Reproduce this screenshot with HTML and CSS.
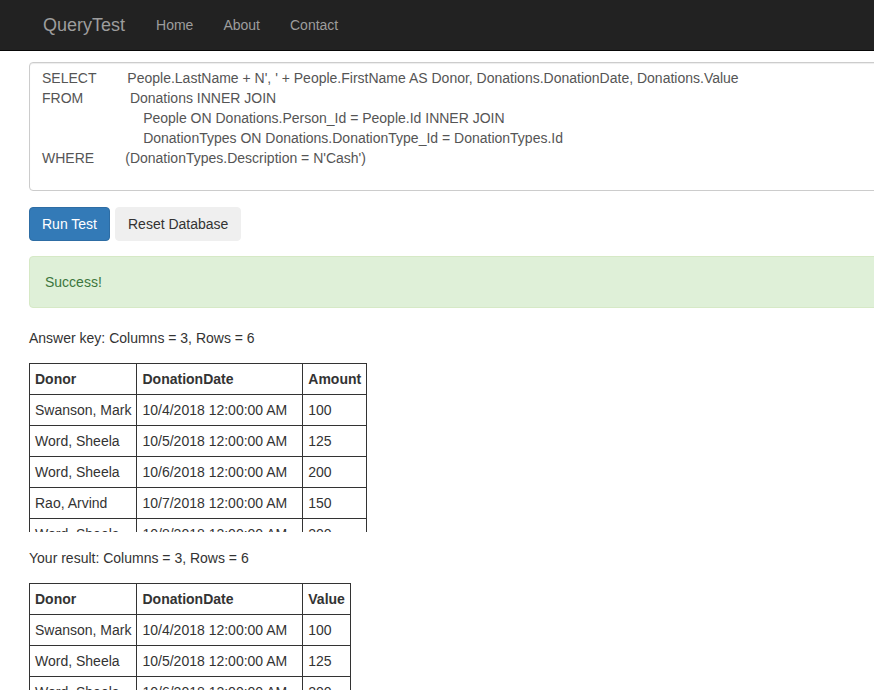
FILE: index.html
```html
<!DOCTYPE html>
<html>
<head>
<meta charset="utf-8">
<title>QueryTest</title>
<link rel="stylesheet" href="styles.css">
</head>
<body>
<nav class="navbar">
  <a class="brand" href="#">QueryTest</a>
  <a class="nav-link" href="#">Home</a>
  <a class="nav-link" href="#">About</a>
  <a class="nav-link" href="#">Contact</a>
</nav>
<main class="content">
  <label class="query-label">Query text (1):</label>
  <textarea class="query" rows="6">SELECT        People.LastName + N', ' + People.FirstName AS Donor, Donations.DonationDate, Donations.Value
FROM            Donations INNER JOIN
                          People ON Donations.Person_Id = People.Id INNER JOIN
                          DonationTypes ON Donations.DonationType_Id = DonationTypes.Id
WHERE        (DonationTypes.Description = N'Cash')</textarea>
  <div class="actions">
    <button class="btn btn-primary">Run Test</button>
    <button class="btn btn-default">Reset Database</button>
  </div>
  <div class="alert">Success!</div>

  <p class="summary">Answer key: Columns = 3, Rows = 6</p>
  <div class="scroll">
    <table class="grid">
      <tr><th>Donor</th><th class="date">DonationDate</th><th>Amount</th></tr>
      <tr><td>Swanson, Mark</td><td class="date">10/4/2018 12:00:00 AM</td><td>100</td></tr>
      <tr><td>Word, Sheela</td><td class="date">10/5/2018 12:00:00 AM</td><td>125</td></tr>
      <tr><td>Word, Sheela</td><td class="date">10/6/2018 12:00:00 AM</td><td>200</td></tr>
      <tr><td>Rao, Arvind</td><td class="date">10/7/2018 12:00:00 AM</td><td>150</td></tr>
      <tr><td>Word, Sheela</td><td class="date">10/8/2018 12:00:00 AM</td><td>200</td></tr>
      <tr><td>Swanson, Mark</td><td class="date">10/9/2018 12:00:00 AM</td><td>100</td></tr>
    </table>
  </div>

  <p class="summary second">Your result: Columns = 3, Rows = 6</p>
  <div class="scroll">
    <table class="grid">
      <tr><th>Donor</th><th class="date">DonationDate</th><th>Value</th></tr>
      <tr><td>Swanson, Mark</td><td class="date">10/4/2018 12:00:00 AM</td><td>100</td></tr>
      <tr><td>Word, Sheela</td><td class="date">10/5/2018 12:00:00 AM</td><td>125</td></tr>
      <tr><td>Word, Sheela</td><td class="date">10/6/2018 12:00:00 AM</td><td>200</td></tr>
      <tr><td>Rao, Arvind</td><td class="date">10/7/2018 12:00:00 AM</td><td>150</td></tr>
      <tr><td>Word, Sheela</td><td class="date">10/8/2018 12:00:00 AM</td><td>200</td></tr>
      <tr><td>Swanson, Mark</td><td class="date">10/9/2018 12:00:00 AM</td><td>100</td></tr>
    </table>
  </div>
</main>
</body>
</html>
```
FILE: styles.css
```css
html, body {
  margin: 0;
  padding: 0;
  overflow: hidden;
}
body {
  font-family: "Liberation Sans", Arial, sans-serif;
  font-size: 14px;
  line-height: 20px;
  color: #333;
  background: #fff;
}
.navbar {
  position: fixed;
  top: 0;
  left: 0;
  right: 0;
  height: 50px;
  background: #222;
  border-bottom: 1px solid #080808;
  display: flex;
  align-items: center;
  padding-left: 28px;
  z-index: 10;
}
.navbar a {
  text-decoration: none;
  color: #9d9d9d;
}
.brand {
  font-size: 18px;
  line-height: 20px;
  padding: 15px 16px 15px 15px;
}
.nav-link {
  padding: 15px;
  line-height: 20px;
}
.content {
  padding: 33px 0 0 29px;
  width: 1100px;
}
.query-label {
  display: block;
  font-weight: bold;
  margin-bottom: 9px;
}
.query {
  display: block;
  box-sizing: border-box;
  width: 1100px;
  height: 129px;
  margin: 0;
  padding: 5px 12px 6px;
  font-family: "Liberation Sans", Arial, sans-serif;
  font-size: 14px;
  line-height: 20px;
  color: #555;
  background: #fff;
  border: 1px solid #ccc;
  border-radius: 4px;
  box-shadow: inset 0 1px 1px rgba(0, 0, 0, 0.075);
  resize: vertical;
  white-space: pre;
  overflow: hidden;
}
.actions {
  display: flex;
  gap: 5px;
  margin-top: 16px;
}
.btn {
  font-family: "Liberation Sans", Arial, sans-serif;
  font-size: 14px;
  line-height: 20px;
  padding: 6px 12px;
  border-radius: 4px;
  border: 1px solid transparent;
  cursor: pointer;
}
.btn-primary {
  background: #337ab7;
  border-color: #2e6da4;
  color: #fff;
}
.btn-default {
  background: #efefef;
  border-color: #efefef;
  color: #333;
}
.alert {
  margin-top: 15px;
  padding: 15px;
  width: 1100px;
  box-sizing: border-box;
  background: #dff0d8;
  border: 1px solid #d6e9c6;
  border-radius: 4px;
  color: #3c763d;
}
.summary {
  margin: 20px 0 15px;
}
.summary.second {
  margin-top: 16px;
}
.scroll {
  height: 169px;
  overflow: hidden;
}
.grid {
  border-collapse: collapse;
}
.grid th, .grid td {
  border: 1px solid #333;
  padding: 5px;
  text-align: left;
  white-space: nowrap;
}
.grid th {
  font-weight: bold;
}
.grid .date {
  padding-right: 15px;
}
```
